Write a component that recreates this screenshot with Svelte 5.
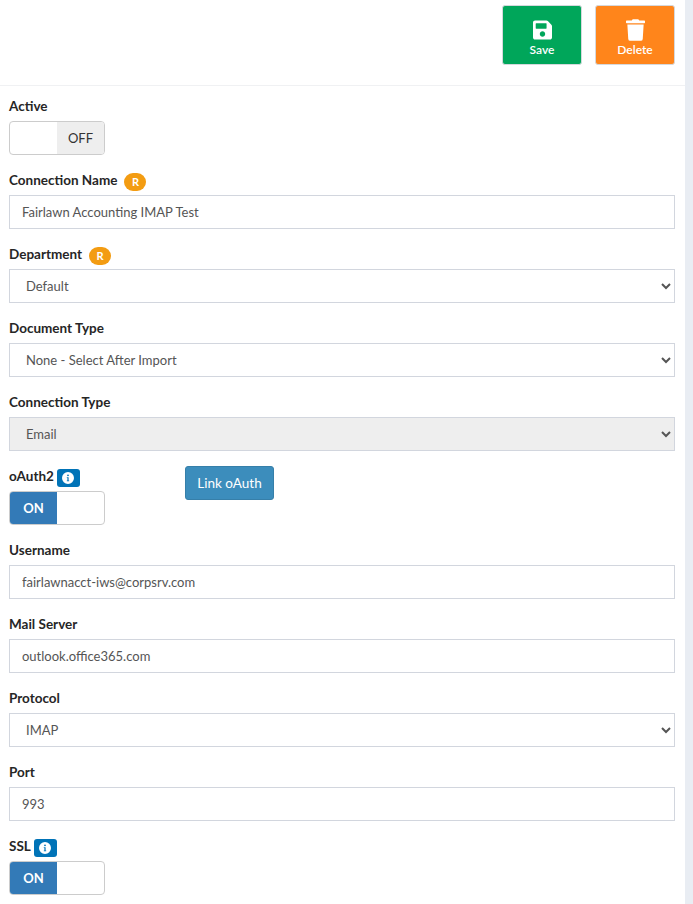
<script>
	const info = 'M8 0a8 8 0 1 0 0 16A8 8 0 0 0 8 0zm0 3.2a1.2 1.2 0 1 1 0 2.4 1.2 1.2 0 0 1 0-2.4zM9.6 12.4H6.4v-1.1h.8V8H6.4V6.9h2.4v4.4h.8z';
</script>

{#snippet infoBadge()}
	<span class="info">
		<svg viewBox="0 0 16 16" width="12" height="12" aria-hidden="true"><path d={info} fill="#fff" fill-rule="evenodd" /></svg>
	</span>
{/snippet}

{#snippet toggle(on)}
	<div class="toggle">
		{#if on}
			<span class="side on">ON</span><span class="side"></span>
		{:else}
			<span class="side"></span><span class="side off">OFF</span>
		{/if}
	</div>
{/snippet}

<div class="page">
	<main>
		<header class="topbar">
			<button class="action save" type="button">
				<svg viewBox="0 0 448 512" width="19" height="22" aria-hidden="true"><path fill="#fff" d="M433.941 129.941l-83.882-83.882A48 48 0 0 0 316.118 32H48C21.49 32 0 53.49 0 80v352c0 26.51 21.49 48 48 48h352c26.51 0 48-21.49 48-48V163.882a48 48 0 0 0-14.059-33.941zM224 416c-35.346 0-64-28.654-64-64 0-35.346 28.654-64 64-64s64 28.654 64 64c0 35.346-28.654 64-64 64zm96-304.52V212c0 6.627-5.373 12-12 12H76c-6.627 0-12-5.373-12-12V108c0-6.627 5.373-12 12-12h228.52c3.183 0 6.235 1.264 8.485 3.515l3.48 3.48A11.996 11.996 0 0 1 320 111.48z" /></svg>
				Save
			</button>
			<button class="action delete" type="button">
				<svg viewBox="0 0 448 512" width="19" height="22" aria-hidden="true"><path fill="#fff" d="M432 32H312l-9.4-18.7A24 24 0 0 0 281.1 0H166.8a23.72 23.72 0 0 0-21.4 13.3L136 32H16A16 16 0 0 0 0 48v32a16 16 0 0 0 16 16h416a16 16 0 0 0 16-16V48a16 16 0 0 0-16-16zM53.2 467a48 48 0 0 0 47.9 45h245.8a48 48 0 0 0 47.9-45L416 128H32z" /></svg>
				Delete
			</button>
		</header>

		<form class="form">
			<div class="group">
				<span class="label">Active</span>
				{@render toggle(false)}
			</div>

			<div class="group">
				<span class="label">Connection Name <span class="req">R</span></span>
				<input class="control" value="Fairlawn Accounting IMAP Test" />
			</div>

			<div class="group">
				<span class="label">Department <span class="req">R</span></span>
				<select class="control"><option>Default</option></select>
			</div>

			<div class="group">
				<span class="label">Document Type</span>
				<select class="control"><option>None - Select After Import</option></select>
			</div>

			<div class="group">
				<span class="label">Connection Type</span>
				<select class="control" disabled><option>Email</option></select>
			</div>

			<div class="group split">
				<div class="col">
					<span class="label">oAuth2 {@render infoBadge()}</span>
					{@render toggle(true)}
				</div>
				<button class="link" type="button">Link oAuth</button>
			</div>

			<div class="group">
				<span class="label">Username</span>
				<input class="control" value="fairlawnacct-iws@corpsrv.com" />
			</div>

			<div class="group">
				<span class="label">Mail Server</span>
				<input class="control" value="outlook.office365.com" />
			</div>

			<div class="group">
				<span class="label">Protocol</span>
				<select class="control"><option>IMAP</option></select>
			</div>

			<div class="group">
				<span class="label">Port</span>
				<input class="control" value="993" />
			</div>

			<div class="group">
				<span class="label">SSL {@render infoBadge()}</span>
				{@render toggle(true)}
			</div>
		</form>
	</main>
	<aside class="rail"></aside>
</div>

<style>
	:global(body) {
		overflow: hidden;
		background: #fff;
	}

	.page {
		display: flex;
		height: 904px;
		overflow: hidden;
		font-family: Lato, 'Open Sans', sans-serif;
		font-size: 13px;
		color: #555;
	}

	main {
		flex: 0 0 685px;
	}

	.rail {
		flex: 0 0 8px;
		background: #e9edf3;
	}

	.topbar {
		display: flex;
		justify-content: flex-end;
		gap: 13px;
		height: 86px;
		padding: 5px 10px 0 0;
		box-sizing: border-box;
		border-bottom: 1px solid #f0f1f3;
	}

	.action {
		display: flex;
		flex-direction: column;
		align-items: center;
		gap: 2px;
		width: 80px;
		height: 60px;
		padding: 13px 0 0;
		box-sizing: border-box;
		border: 1px solid #d5d8dc;
		border-radius: 3px;
		color: #fff;
		font: 600 12px/14px Lato, sans-serif;
	}

	.save {
		background: #00a65a;
	}

	.delete {
		background: #ff851b;
	}

	.form {
		padding: 10px 10px 0 9px;
	}

	.group {
		margin-bottom: 15px;
	}

	.split {
		display: flex;
		align-items: flex-start;
	}

	.col {
		flex: 0 0 176px;
	}

	.label {
		display: flex;
		align-items: center;
		gap: 6px;
		height: 20px;
		margin-bottom: 5px;
		font-weight: 700;
		font-size: 13.5px;
		color: #262626;
	}

	.req {
		display: inline-flex;
		align-items: center;
		justify-content: center;
		width: 22px;
		height: 18px;
		margin: 3px 0 0 1px;
		border-radius: 9px;
		background: #f39c12;
		color: #fff;
		font-size: 11px;
	}

	.info {
		display: inline-flex;
		align-items: center;
		justify-content: center;
		width: 23px;
		height: 18px;
		margin: 3px 0 0 -3px;
		border-radius: 3px;
		background: #0073b7;
	}

	.control {
		display: block;
		width: 100%;
		height: 34px;
		padding: 6px 12px;
		box-sizing: border-box;
		border: 1px solid #d2d6de;
		border-radius: 0;
		background-color: #fff;
		color: #555;
		font: 400 13px/20px Lato, sans-serif;
	}

	select.control:disabled {
		background-color: #eee;
		opacity: 1;
		color: #555;
	}

	.toggle {
		display: flex;
		width: 96px;
		height: 34px;
		box-sizing: border-box;
		border: 1px solid #ccc;
		border-radius: 4px;
		overflow: hidden;
	}

	.side {
		flex: 1;
		display: flex;
		align-items: center;
		justify-content: center;
		font-size: 13px;
	}

	.on {
		background: #337ab7;
		color: #fff;
		font-weight: 700;
	}

	.off {
		background: #eee;
		color: #333;
	}

	.link {
		width: 89px;
		height: 34px;
		padding: 0;
		border: 1px solid #367fa9;
		border-radius: 3px;
		background: #3c8dbc;
		color: #fff;
		font: 400 13.5px Lato, sans-serif;
	}
</style>
